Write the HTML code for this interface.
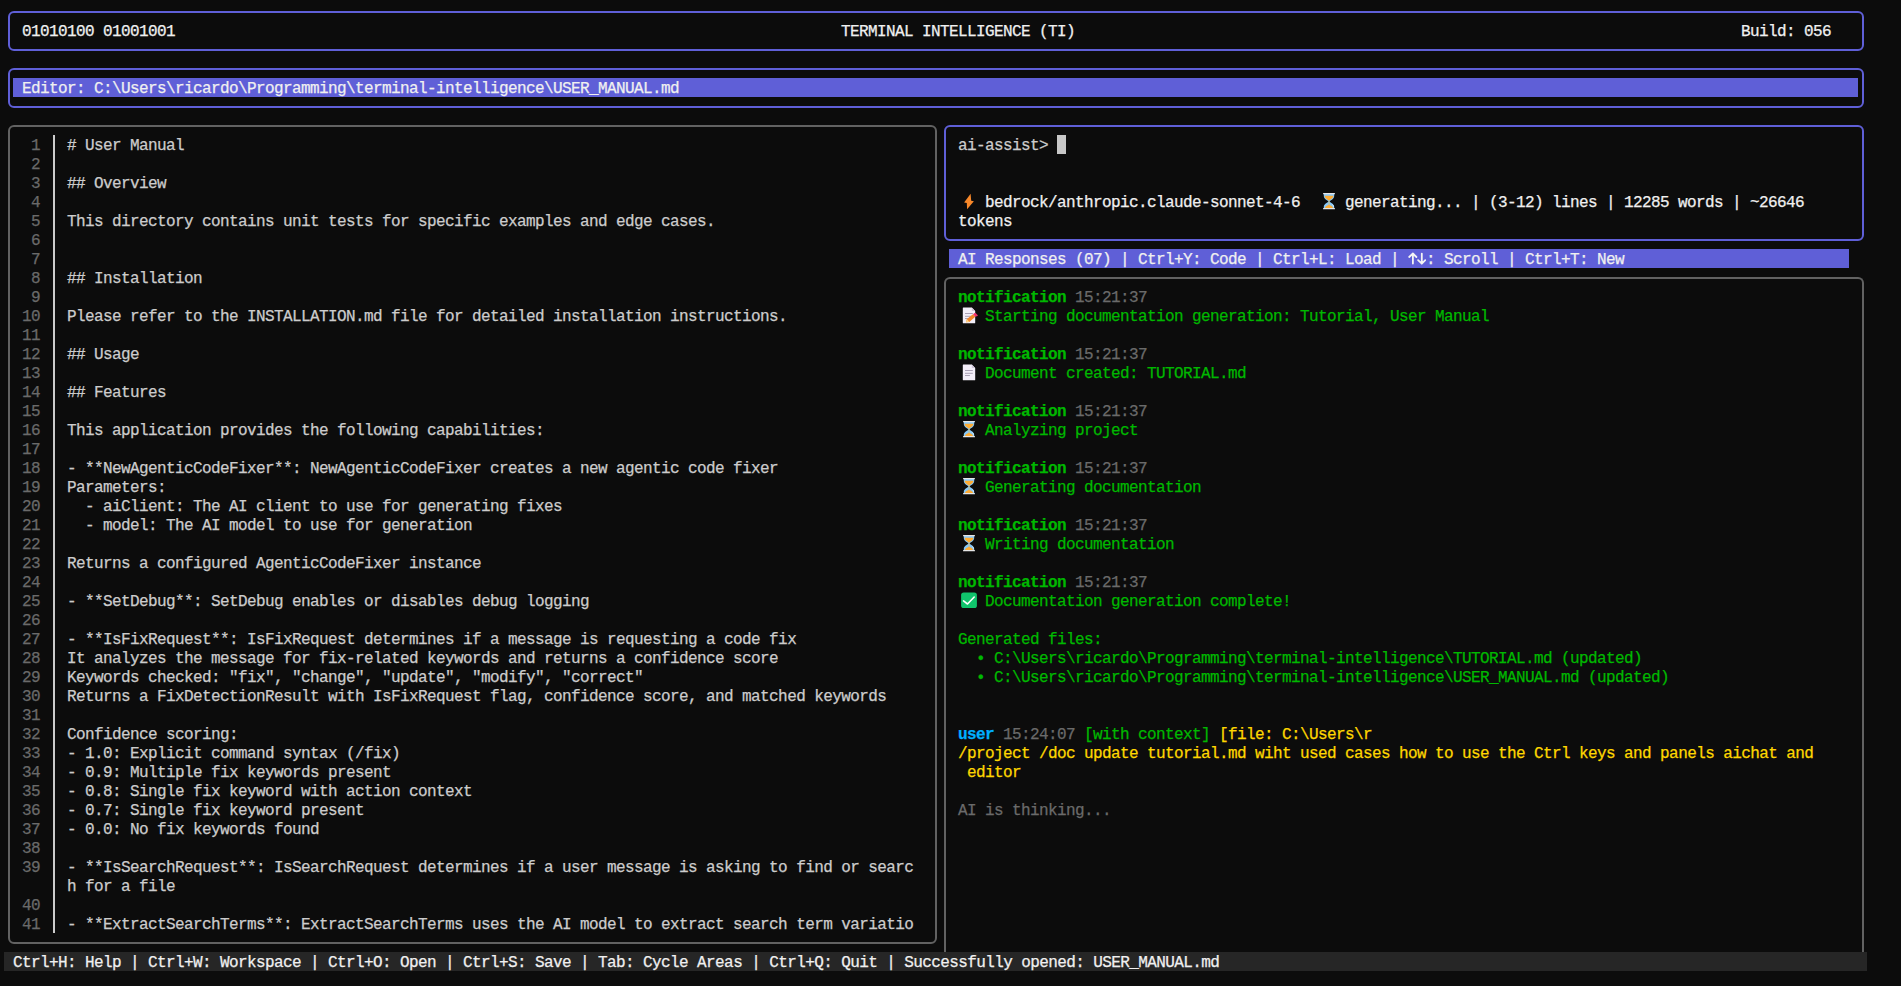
<!DOCTYPE html>
<html><head><meta charset="utf-8"><title>Terminal Intelligence</title><style>
html,body{margin:0;padding:0;background:#0c0c0c;width:1901px;height:986px;overflow:hidden;}
body{position:relative;font-family:"Liberation Mono",monospace;}
.r{position:absolute;white-space:pre;font-size:16px;line-height:19px;letter-spacing:-0.6px;-webkit-text-stroke:0.25px currentColor;height:19px;padding-top:2px;box-sizing:border-box;}
svg{display:block}
</style></head><body>
<div style="position:absolute;left:8px;top:11px;width:1856px;height:40px;border:2px solid #5f5fd7;border-radius:6px;box-sizing:border-box;"></div>
<div class="r" style="left:22px;top:21px"><span style="color:#f0f0f0">01010100 01001001</span></div>
<div class="r" style="left:841px;top:21px"><span style="color:#f0f0f0">TERMINAL INTELLIGENCE (TI)</span></div>
<div class="r" style="left:1741px;top:21px"><span style="color:#f0f0f0">Build: 056</span></div>
<div style="position:absolute;left:8px;top:68px;width:1856px;height:40px;border:2px solid #5f5fd7;border-radius:6px;box-sizing:border-box;"></div>
<div style="position:absolute;left:13px;top:78px;width:1845px;height:19px;background:#5f5fd7"></div>
<div class="r" style="left:22px;top:78px"><span style="color:#f0f0f0">Editor: C:\Users\ricardo\Programming\terminal-intelligence\USER_MANUAL.md</span></div>
<div style="position:absolute;left:8px;top:125px;width:929px;height:819px;border:2px solid #626262;border-radius:6px;box-sizing:border-box;"></div>
<div class="r" style="left:13px;top:135px"><span style="color:#6a6a6a">  1</span></div>
<div class="r" style="left:67px;top:135px"><span style="color:#cccccc"># User Manual</span></div>
<div class="r" style="left:13px;top:154px"><span style="color:#6a6a6a">  2</span></div>
<div class="r" style="left:13px;top:173px"><span style="color:#6a6a6a">  3</span></div>
<div class="r" style="left:67px;top:173px"><span style="color:#cccccc">## Overview</span></div>
<div class="r" style="left:13px;top:192px"><span style="color:#6a6a6a">  4</span></div>
<div class="r" style="left:13px;top:211px"><span style="color:#6a6a6a">  5</span></div>
<div class="r" style="left:67px;top:211px"><span style="color:#cccccc">This directory contains unit tests for specific examples and edge cases.</span></div>
<div class="r" style="left:13px;top:230px"><span style="color:#6a6a6a">  6</span></div>
<div class="r" style="left:13px;top:249px"><span style="color:#6a6a6a">  7</span></div>
<div class="r" style="left:13px;top:268px"><span style="color:#6a6a6a">  8</span></div>
<div class="r" style="left:67px;top:268px"><span style="color:#cccccc">## Installation</span></div>
<div class="r" style="left:13px;top:287px"><span style="color:#6a6a6a">  9</span></div>
<div class="r" style="left:13px;top:306px"><span style="color:#6a6a6a"> 10</span></div>
<div class="r" style="left:67px;top:306px"><span style="color:#cccccc">Please refer to the INSTALLATION.md file for detailed installation instructions.</span></div>
<div class="r" style="left:13px;top:325px"><span style="color:#6a6a6a"> 11</span></div>
<div class="r" style="left:13px;top:344px"><span style="color:#6a6a6a"> 12</span></div>
<div class="r" style="left:67px;top:344px"><span style="color:#cccccc">## Usage</span></div>
<div class="r" style="left:13px;top:363px"><span style="color:#6a6a6a"> 13</span></div>
<div class="r" style="left:13px;top:382px"><span style="color:#6a6a6a"> 14</span></div>
<div class="r" style="left:67px;top:382px"><span style="color:#cccccc">## Features</span></div>
<div class="r" style="left:13px;top:401px"><span style="color:#6a6a6a"> 15</span></div>
<div class="r" style="left:13px;top:420px"><span style="color:#6a6a6a"> 16</span></div>
<div class="r" style="left:67px;top:420px"><span style="color:#cccccc">This application provides the following capabilities:</span></div>
<div class="r" style="left:13px;top:439px"><span style="color:#6a6a6a"> 17</span></div>
<div class="r" style="left:13px;top:458px"><span style="color:#6a6a6a"> 18</span></div>
<div class="r" style="left:67px;top:458px"><span style="color:#cccccc">- **NewAgenticCodeFixer**: NewAgenticCodeFixer creates a new agentic code fixer</span></div>
<div class="r" style="left:13px;top:477px"><span style="color:#6a6a6a"> 19</span></div>
<div class="r" style="left:67px;top:477px"><span style="color:#cccccc">Parameters:</span></div>
<div class="r" style="left:13px;top:496px"><span style="color:#6a6a6a"> 20</span></div>
<div class="r" style="left:67px;top:496px"><span style="color:#cccccc">  - aiClient: The AI client to use for generating fixes</span></div>
<div class="r" style="left:13px;top:515px"><span style="color:#6a6a6a"> 21</span></div>
<div class="r" style="left:67px;top:515px"><span style="color:#cccccc">  - model: The AI model to use for generation</span></div>
<div class="r" style="left:13px;top:534px"><span style="color:#6a6a6a"> 22</span></div>
<div class="r" style="left:13px;top:553px"><span style="color:#6a6a6a"> 23</span></div>
<div class="r" style="left:67px;top:553px"><span style="color:#cccccc">Returns a configured AgenticCodeFixer instance</span></div>
<div class="r" style="left:13px;top:572px"><span style="color:#6a6a6a"> 24</span></div>
<div class="r" style="left:13px;top:591px"><span style="color:#6a6a6a"> 25</span></div>
<div class="r" style="left:67px;top:591px"><span style="color:#cccccc">- **SetDebug**: SetDebug enables or disables debug logging</span></div>
<div class="r" style="left:13px;top:610px"><span style="color:#6a6a6a"> 26</span></div>
<div class="r" style="left:13px;top:629px"><span style="color:#6a6a6a"> 27</span></div>
<div class="r" style="left:67px;top:629px"><span style="color:#cccccc">- **IsFixRequest**: IsFixRequest determines if a message is requesting a code fix</span></div>
<div class="r" style="left:13px;top:648px"><span style="color:#6a6a6a"> 28</span></div>
<div class="r" style="left:67px;top:648px"><span style="color:#cccccc">It analyzes the message for fix-related keywords and returns a confidence score</span></div>
<div class="r" style="left:13px;top:667px"><span style="color:#6a6a6a"> 29</span></div>
<div class="r" style="left:67px;top:667px"><span style="color:#cccccc">Keywords checked: "fix", "change", "update", "modify", "correct"</span></div>
<div class="r" style="left:13px;top:686px"><span style="color:#6a6a6a"> 30</span></div>
<div class="r" style="left:67px;top:686px"><span style="color:#cccccc">Returns a FixDetectionResult with IsFixRequest flag, confidence score, and matched keywords</span></div>
<div class="r" style="left:13px;top:705px"><span style="color:#6a6a6a"> 31</span></div>
<div class="r" style="left:13px;top:724px"><span style="color:#6a6a6a"> 32</span></div>
<div class="r" style="left:67px;top:724px"><span style="color:#cccccc">Confidence scoring:</span></div>
<div class="r" style="left:13px;top:743px"><span style="color:#6a6a6a"> 33</span></div>
<div class="r" style="left:67px;top:743px"><span style="color:#cccccc">- 1.0: Explicit command syntax (/fix)</span></div>
<div class="r" style="left:13px;top:762px"><span style="color:#6a6a6a"> 34</span></div>
<div class="r" style="left:67px;top:762px"><span style="color:#cccccc">- 0.9: Multiple fix keywords present</span></div>
<div class="r" style="left:13px;top:781px"><span style="color:#6a6a6a"> 35</span></div>
<div class="r" style="left:67px;top:781px"><span style="color:#cccccc">- 0.8: Single fix keyword with action context</span></div>
<div class="r" style="left:13px;top:800px"><span style="color:#6a6a6a"> 36</span></div>
<div class="r" style="left:67px;top:800px"><span style="color:#cccccc">- 0.7: Single fix keyword present</span></div>
<div class="r" style="left:13px;top:819px"><span style="color:#6a6a6a"> 37</span></div>
<div class="r" style="left:67px;top:819px"><span style="color:#cccccc">- 0.0: No fix keywords found</span></div>
<div class="r" style="left:13px;top:838px"><span style="color:#6a6a6a"> 38</span></div>
<div class="r" style="left:13px;top:857px"><span style="color:#6a6a6a"> 39</span></div>
<div class="r" style="left:67px;top:857px"><span style="color:#cccccc">- **IsSearchRequest**: IsSearchRequest determines if a user message is asking to find or searc</span></div>
<div class="r" style="left:67px;top:876px"><span style="color:#cccccc">h for a file</span></div>
<div class="r" style="left:13px;top:895px"><span style="color:#6a6a6a"> 40</span></div>
<div class="r" style="left:13px;top:914px"><span style="color:#6a6a6a"> 41</span></div>
<div class="r" style="left:67px;top:914px"><span style="color:#cccccc">- **ExtractSearchTerms**: ExtractSearchTerms uses the AI model to extract search term variatio</span></div>
<div style="position:absolute;left:53px;top:135px;width:2px;height:798px;background:#cccccc"></div>
<div style="position:absolute;left:944px;top:125px;width:920px;height:116px;border:2px solid #5f5fd7;border-radius:6px;box-sizing:border-box;"></div>
<div class="r" style="left:958px;top:135px"><span style="color:#cccccc">ai-assist&gt; </span></div>
<div style="position:absolute;left:1057px;top:135px;width:9px;height:19px;background:#c8c8c8"></div>
<div class="r" style="left:985px;top:192px"><span style="color:#f0f0f0">bedrock/anthropic.claude-sonnet-4-6</span></div>
<div class="r" style="left:1345px;top:192px"><span style="color:#f0f0f0">generating... | (3-12) lines | 12285 words | ~26646</span></div>
<div class="r" style="left:958px;top:211px"><span style="color:#f0f0f0">tokens</span></div>
<div style="position:absolute;left:949px;top:249px;width:900px;height:19px;background:#5f5fd7"></div>
<div class="r" style="left:958px;top:249px"><span style="color:#f0f0f0">AI Responses (07) | Ctrl+Y: Code | Ctrl+L: Load |   : Scroll | Ctrl+T: New</span></div>
<div style="position:absolute;left:944px;top:277px;width:920px;height:675px;border:2px solid #626262;border-bottom:none;border-radius:6px 6px 0 0;box-sizing:border-box;"></div>
<div class="r" style="left:958px;top:287px"><span style="color:#00b800;font-weight:bold">notification</span><span style="color:#6a6a6a"> 15:21:37</span></div>
<div class="r" style="left:985px;top:306px"><span style="color:#00b800">Starting documentation generation: Tutorial, User Manual</span></div>
<div class="r" style="left:958px;top:344px"><span style="color:#00b800;font-weight:bold">notification</span><span style="color:#6a6a6a"> 15:21:37</span></div>
<div class="r" style="left:985px;top:363px"><span style="color:#00b800">Document created: TUTORIAL.md</span></div>
<div class="r" style="left:958px;top:401px"><span style="color:#00b800;font-weight:bold">notification</span><span style="color:#6a6a6a"> 15:21:37</span></div>
<div class="r" style="left:985px;top:420px"><span style="color:#00b800">Analyzing project</span></div>
<div class="r" style="left:958px;top:458px"><span style="color:#00b800;font-weight:bold">notification</span><span style="color:#6a6a6a"> 15:21:37</span></div>
<div class="r" style="left:985px;top:477px"><span style="color:#00b800">Generating documentation</span></div>
<div class="r" style="left:958px;top:515px"><span style="color:#00b800;font-weight:bold">notification</span><span style="color:#6a6a6a"> 15:21:37</span></div>
<div class="r" style="left:985px;top:534px"><span style="color:#00b800">Writing documentation</span></div>
<div class="r" style="left:958px;top:572px"><span style="color:#00b800;font-weight:bold">notification</span><span style="color:#6a6a6a"> 15:21:37</span></div>
<div class="r" style="left:985px;top:591px"><span style="color:#00b800">Documentation generation complete!</span></div>
<div class="r" style="left:958px;top:629px"><span style="color:#00b800">Generated files:</span></div>
<div class="r" style="left:958px;top:648px"><span style="color:#00b800">  • C:\Users\ricardo\Programming\terminal-intelligence\TUTORIAL.md (updated)</span></div>
<div class="r" style="left:958px;top:667px"><span style="color:#00b800">  • C:\Users\ricardo\Programming\terminal-intelligence\USER_MANUAL.md (updated)</span></div>
<div class="r" style="left:958px;top:724px"><span style="color:#00afff;font-weight:bold">user</span><span style="color:#6a6a6a"> 15:24:07 </span><span style="color:#00b800">[with context]</span><span style="color:#ffd700"> [file: C:\Users\r</span></div>
<div class="r" style="left:958px;top:743px"><span style="color:#ffd700">/project /doc update tutorial.md wiht used cases how to use the Ctrl keys and panels aichat and</span></div>
<div class="r" style="left:958px;top:762px"><span style="color:#ffd700"> editor</span></div>
<div class="r" style="left:958px;top:800px"><span style="color:#6a6a6a">AI is thinking...</span></div>
<div style="position:absolute;left:4px;top:952px;width:1863px;height:19px;background:#262626"></div>
<div class="r" style="left:13px;top:952px"><span style="color:#f0f0f0">Ctrl+H: Help | Ctrl+W: Workspace | Ctrl+O: Open | Ctrl+S: Save | Tab: Cycle Areas | Ctrl+Q: Quit | Successfully opened: USER_MANUAL.md</span></div>
<div style="position:absolute;left:1408px;top:249px;width:18px;height:19px"><svg width="18" height="19" viewBox="0 0 18 19" fill="none" stroke="#f4f4f4" stroke-width="1.8" stroke-linecap="round" stroke-linejoin="round"><path d="M4.9 14.6 V4.8 M1.2 8 L4.9 4.5 L8.4 8"/><path d="M13.8 4.6 V14.4 M10.1 11.2 L13.8 14.7 L17.3 11.2"/></svg></div>
<div style="position:absolute;left:958px;top:192px;width:20px;height:19px"><svg width="18" height="19" viewBox="0 0 18 19"><path d="M12.6 1.8 L6.1 10.6 L8.8 11 L9.1 17.2 L15.9 9.3 L13.2 8.7 Z" fill="#f7882a"/></svg></div>
<div style="position:absolute;left:1318px;top:192px;width:20px;height:19px"><svg width="18" height="19" viewBox="0 0 18 19"><path d="M5.8 2.1 H16.2 V4 C16.2 7 12.6 8.2 11.5 9.6 C12.6 11 16.2 12 16.2 15 V16 H5.8 V15 C5.8 12 9.4 11 10.5 9.6 C9.4 8.2 5.8 7 5.8 4 Z" fill="#88c9f9"/><path d="M6.6 3.8 H15.4 C15.2 6.5 12.3 7.5 11 8.7 C9.7 7.5 6.8 6.5 6.6 3.8 Z" fill="#ffac33"/><rect x="10.6" y="8.4" width="0.9" height="5" fill="#d0b870"/><path d="M6.9 16 C7.2 13.8 10 13.2 11 12.7 C12 13.2 14.8 13.8 15.1 16 Z" fill="#ffac33"/><path d="M14.8 12.5 C15.6 13.3 15.9 14.2 16 15.3 L15.4 15.3 C15.2 14.2 14.9 13.5 14 12.6 Z" fill="#e6f5ff"/><rect x="5" y="0.9" width="12" height="1.4" rx="0.6" fill="#e6e6e6"/><rect x="5" y="15.9" width="12" height="1.4" rx="0.6" fill="#e6e6e6"/></svg></div>
<div style="position:absolute;left:958px;top:306px;width:20px;height:19px"><svg width="20" height="19" viewBox="0 0 20 19"><path d="M4.8 2.1 Q4.8 1.6 5.3 1.6 H13.8 L17.2 5 V16.7 Q17.2 17.2 16.7 17.2 H5.3 Q4.8 17.2 4.8 16.7 Z" fill="#f3eef8"/><path d="M13.8 1.6 L17.2 5 H14.3 Q13.8 5 13.8 4.5 Z" fill="#cfc6d8"/><rect x="7" y="7" width="7.8" height="1" fill="#aaa1b5"/><rect x="7" y="9.8" width="7.8" height="1" fill="#aaa1b5"/><rect x="7" y="12" width="4.9" height="1" fill="#aaa1b5"/><path d="M8.1 16.2 L8.9 13.0 L15.0 8.3 L17.3 10.8 L11.3 16.0 Z" fill="#f4862a"/><path d="M15.0 8.3 L16.6 7.1 Q17.2 6.7 17.8 7.2 L19.6 9.0 Q20 9.6 19.5 10.1 L17.3 10.8 Z" fill="#f0306a"/><path d="M8.1 16.2 L8.9 13.0 L11.3 16.0 Z" fill="#ffd68a"/></svg></div>
<div style="position:absolute;left:958px;top:363px;width:20px;height:19px"><svg width="18" height="19" viewBox="0 0 18 19"><path d="M4.8 2.1 Q4.8 1.6 5.3 1.6 H13.8 L17.2 5 V16.7 Q17.2 17.2 16.7 17.2 H5.3 Q4.8 17.2 4.8 16.7 Z" fill="#f3eef8"/><path d="M13.8 1.6 L17.2 5 H14.3 Q13.8 5 13.8 4.5 Z" fill="#cfc6d8"/><rect x="7" y="7" width="7.8" height="1" fill="#aaa1b5"/><rect x="7" y="9.8" width="7.8" height="1" fill="#aaa1b5"/><rect x="7" y="12" width="4.9" height="1" fill="#aaa1b5"/></svg></div>
<div style="position:absolute;left:958px;top:420px;width:20px;height:19px"><svg width="18" height="19" viewBox="0 0 18 19"><path d="M5.8 2.1 H16.2 V4 C16.2 7 12.6 8.2 11.5 9.6 C12.6 11 16.2 12 16.2 15 V16 H5.8 V15 C5.8 12 9.4 11 10.5 9.6 C9.4 8.2 5.8 7 5.8 4 Z" fill="#88c9f9"/><path d="M6.6 3.8 H15.4 C15.2 6.5 12.3 7.5 11 8.7 C9.7 7.5 6.8 6.5 6.6 3.8 Z" fill="#ffac33"/><rect x="10.6" y="8.4" width="0.9" height="5" fill="#d0b870"/><path d="M6.9 16 C7.2 13.8 10 13.2 11 12.7 C12 13.2 14.8 13.8 15.1 16 Z" fill="#ffac33"/><path d="M14.8 12.5 C15.6 13.3 15.9 14.2 16 15.3 L15.4 15.3 C15.2 14.2 14.9 13.5 14 12.6 Z" fill="#e6f5ff"/><rect x="5" y="0.9" width="12" height="1.4" rx="0.6" fill="#e6e6e6"/><rect x="5" y="15.9" width="12" height="1.4" rx="0.6" fill="#e6e6e6"/></svg></div>
<div style="position:absolute;left:958px;top:477px;width:20px;height:19px"><svg width="18" height="19" viewBox="0 0 18 19"><path d="M5.8 2.1 H16.2 V4 C16.2 7 12.6 8.2 11.5 9.6 C12.6 11 16.2 12 16.2 15 V16 H5.8 V15 C5.8 12 9.4 11 10.5 9.6 C9.4 8.2 5.8 7 5.8 4 Z" fill="#88c9f9"/><path d="M6.6 3.8 H15.4 C15.2 6.5 12.3 7.5 11 8.7 C9.7 7.5 6.8 6.5 6.6 3.8 Z" fill="#ffac33"/><rect x="10.6" y="8.4" width="0.9" height="5" fill="#d0b870"/><path d="M6.9 16 C7.2 13.8 10 13.2 11 12.7 C12 13.2 14.8 13.8 15.1 16 Z" fill="#ffac33"/><path d="M14.8 12.5 C15.6 13.3 15.9 14.2 16 15.3 L15.4 15.3 C15.2 14.2 14.9 13.5 14 12.6 Z" fill="#e6f5ff"/><rect x="5" y="0.9" width="12" height="1.4" rx="0.6" fill="#e6e6e6"/><rect x="5" y="15.9" width="12" height="1.4" rx="0.6" fill="#e6e6e6"/></svg></div>
<div style="position:absolute;left:958px;top:534px;width:20px;height:19px"><svg width="18" height="19" viewBox="0 0 18 19"><path d="M5.8 2.1 H16.2 V4 C16.2 7 12.6 8.2 11.5 9.6 C12.6 11 16.2 12 16.2 15 V16 H5.8 V15 C5.8 12 9.4 11 10.5 9.6 C9.4 8.2 5.8 7 5.8 4 Z" fill="#88c9f9"/><path d="M6.6 3.8 H15.4 C15.2 6.5 12.3 7.5 11 8.7 C9.7 7.5 6.8 6.5 6.6 3.8 Z" fill="#ffac33"/><rect x="10.6" y="8.4" width="0.9" height="5" fill="#d0b870"/><path d="M6.9 16 C7.2 13.8 10 13.2 11 12.7 C12 13.2 14.8 13.8 15.1 16 Z" fill="#ffac33"/><path d="M14.8 12.5 C15.6 13.3 15.9 14.2 16 15.3 L15.4 15.3 C15.2 14.2 14.9 13.5 14 12.6 Z" fill="#e6f5ff"/><rect x="5" y="0.9" width="12" height="1.4" rx="0.6" fill="#e6e6e6"/><rect x="5" y="15.9" width="12" height="1.4" rx="0.6" fill="#e6e6e6"/></svg></div>
<div style="position:absolute;left:958px;top:591px;width:20px;height:19px"><svg width="20" height="19" viewBox="0 0 20 19"><rect x="3.1" y="1.4" width="15.8" height="15.7" rx="2.6" fill="#10c46c"/><path d="M5.5 9.9 L9.5 13 L16.2 6" stroke="#ffffff" stroke-width="1.6" fill="none" stroke-linecap="round" stroke-linejoin="round"/></svg></div>
</body></html>
